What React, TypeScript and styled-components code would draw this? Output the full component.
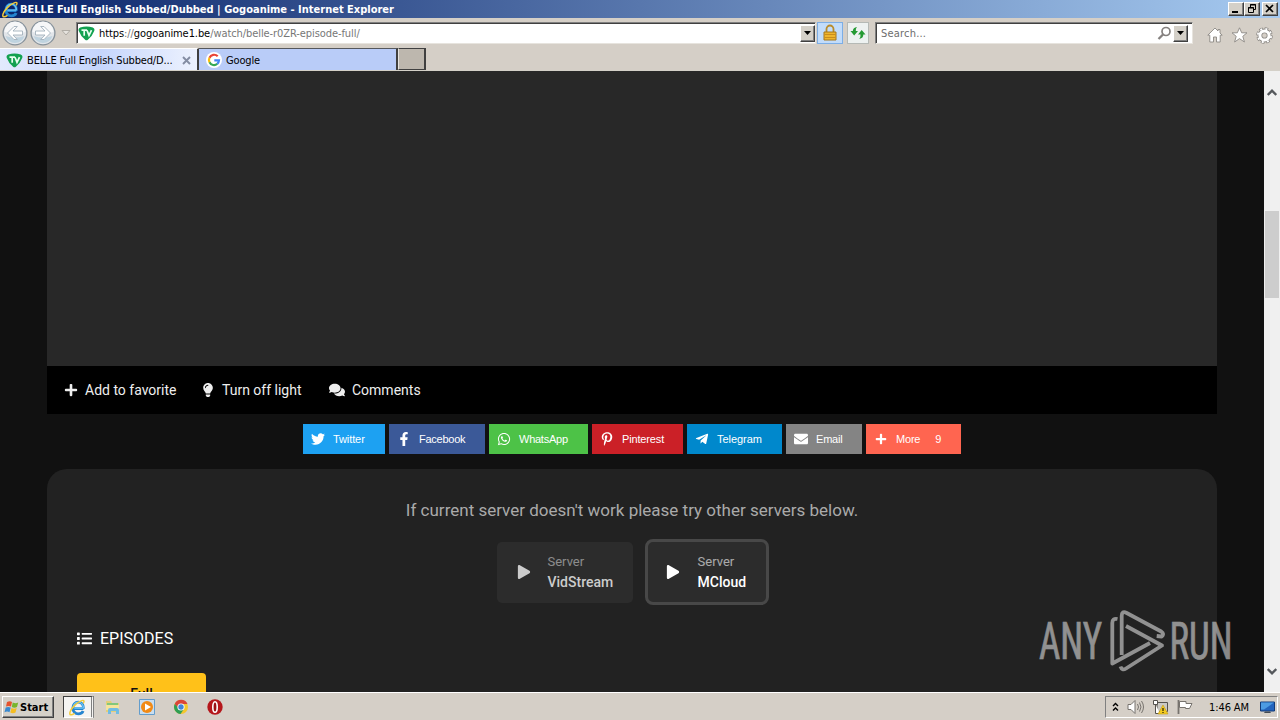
import React from "react";
import styled, { createGlobalStyle, css } from "styled-components";
import {
  FaPlus,
  FaLightbulb,
  FaComments,
  FaTwitter,
  FaFacebookF,
  FaWhatsapp,
  FaPinterestP,
  FaTelegramPlane,
  FaEnvelope,
  FaPlay,
  FaList,
} from "react-icons/fa";

const shareItems = [
  { id: 1, title: "Twitter", color: "#1da1f2", width: 82, spacing: -0.1, icon: <FaTwitter /> },
  { id: 2, title: "Facebook", color: "#3b5998", width: 96, spacing: -0.25, icon: <FaFacebookF /> },
  { id: 3, title: "WhatsApp", color: "#4dc247", width: 99, spacing: -0.25, icon: <FaWhatsapp /> },
  { id: 4, title: "Pinterest", color: "#cb2027", width: 91, spacing: -0.15, icon: <FaPinterestP /> },
  { id: 5, title: "Telegram", color: "#0088cc", width: 95, spacing: -0.05, icon: <FaTelegramPlane /> },
  { id: 6, title: "Email", color: "#848484", width: 76, spacing: -0.2, icon: <FaEnvelope /> },
  { id: 7, title: "More", color: "#ff6550", width: 95, spacing: -0.2, icon: <FaPlus />, iconSize: 12, count: 9 },
];

const servers = [
  { id: 1, name: "VidStream", isActive: false },
  { id: 2, name: "MCloud", isActive: true },
];

const IeLogo = ({ size }: { size: number }) => (
  <svg width={size} height={size} viewBox="0 0 16 16" fill="none">
    <path d="M13.6 9H5M13.6 9C13.8 5.4 11.8 3 8.7 3S3.6 5.5 3.6 8.6 6 14 8.8 14c2.2 0 3.8-1 4.5-2.7" stroke="#2585d0" strokeWidth="2.6" />
    <path d="M13.6 8.6H5M13.5 8.4C13.5 5.4 11.7 3 8.7 3S3.8 5.5 3.8 8.3" stroke="#6cc5f5" strokeWidth="1.2" />
    <path d="M13.4 4.2c1.6-3 .2-3.5-2.5-2.2C6.8 3.8 2.2 8.7 1 12.3c-1 3.2 1.2 3.2 4.2 1.2" stroke="#f2cb3a" strokeWidth="1.4" />
  </svg>
);

const ShieldLogo = () => (
  <svg width="17" height="15" viewBox="0 0 17 15">
    <path d="M2.2 1.6Q8.5-.4 14.8 1.6 17.2 2.6 16.2 5 14.2 10.5 9.6 14 8.5 14.7 7.4 14 2.8 10.5.8 5-.2 2.6 2.2 1.6Z" fill="#12a150" />
    <path d="M3.5 4.2h5.6M6.2 4.2v5.6M9 4.2l2 5.2 2.5-5.2" fill="none" stroke="#e8fff0" strokeWidth="1.7" />
  </svg>
);

const GoogleLogo = () => (
  <svg width="16" height="16" viewBox="0 0 16 16" fill="none" strokeWidth="2.2">
    <circle cx="8" cy="8" r="8" fill="#fff" />
    <path d="M11.7 4.3A5 5 0 0 0 3.5 5.8" stroke="#ea4335" />
    <path d="M3.5 5.8a5 5 0 0 0 0 4.5" stroke="#fbbc05" />
    <path d="M3.5 10.3a5 5 0 0 0 7.8 1.5" stroke="#34a853" />
    <path d="M11.3 11.8A5 5 0 0 0 13 8.3H8.3" stroke="#4285f4" />
  </svg>
);

const NavArrow = ({ flipped }: { flipped?: boolean }) => (
  <svg width="26" height="26" viewBox="0 0 26 26">
    <circle cx="13" cy="13" r="11.9" fill="#e1e5e9" stroke="#87929b" strokeWidth="1.3" />
    <path d="M2.5 12a10.5 10.5 0 0 1 21 0Q13 15 2.5 12Z" fill="#f6f7f8" />
    <path d="M3.5 16a10 10 0 0 0 19 0Q13 19 3.5 16Z" fill="#bfd3df" />
    <path
      transform={flipped ? "matrix(-1 0 0 1 26 0)" : undefined}
      d="M5.5 13 12 6.5h3.3L11 11h9.500v4H11l4.300 4.500H12Z"
      fill="#fff"
      stroke="#a3b1bc"
      strokeWidth=".9"
    />
  </svg>
);

const DownTriangle = () => (
  <svg width="7" height="4" viewBox="0 0 7 4">
    <path d="M0 0h7L3.5 4Z" fill="#000" />
  </svg>
);

const TitleBarSection = () => (
  <TitleBar>
    <IeLogo size={17} />
    <TitleText>BELLE Full English Subbed/Dubbed | Gogoanime - Internet Explorer</TitleText>
    <WindowButton>
      <svg width="12" height="10" viewBox="0 0 12 10"><path d="M2 7h6v2H2Z" /></svg>
    </WindowButton>
    <WindowButton>
      <svg width="12" height="10" viewBox="0 0 12 10" fill="none" stroke="#000">
        <path d="M4.5 3V.5h5v5H8M4 1h6M2.5 3.5h5v5h-5ZM2 4h6" />
      </svg>
    </WindowButton>
    <WindowButton spaced>
      <svg width="12" height="10" viewBox="0 0 12 10"><path d="M2 1l7 7M9 1L2 8" stroke="#000" strokeWidth="1.7" /></svg>
    </WindowButton>
  </TitleBar>
);

const NavigationSection = () => (
  <NavBar>
    <NavButtons>
      <NavArrow />
      <NavArrow flipped />
      <svg width="10" height="8" viewBox="0 0 10 8"><path d="M1 1.5h8L5 6Z" fill="#e6e3de" stroke="#b0aca5" /></svg>
    </NavButtons>
    <AddressBar>
      <ShieldLogo />
      <AddressText>
        <b>https</b>://<b>gogoanime1.be</b>/watch/belle-r0ZR-episode-full/
      </AddressText>
      <DropButton><DownTriangle /></DropButton>
    </AddressBar>
    <ToolButton pressed>
      <svg width="16" height="18" viewBox="0 0 16 18">
        <path d="M4.5 9V5a3.5 3.5 0 0 1 7 0v4" fill="none" stroke="#b98b2a" strokeWidth="1.8" />
        <path d="M2 8h12v8H2Z" fill="#efb52c" stroke="#a5771c" />
        <path d="M2.5 10.5h11M2.5 13.5h11" stroke="#c98d1c" />
      </svg>
    </ToolButton>
    <ToolButton>
      <svg width="16" height="16" viewBox="0 0 16 16" fill="#259a33">
        <path d="M.5 6 4.2 10.5 8 6H5.8q-.3-2.5 1.2-4-4 .5-4.200 4Z" />
        <path d="M8 9.5 11.7 5 15.5 9.5h-2.200q.2 3.500-4 4.500 1.500-1.500 1.200-4.500Z" />
      </svg>
    </ToolButton>
    <SearchBar>
      <SearchText>Search...</SearchText>
      <svg width="15" height="15" viewBox="0 0 15 15" fill="none" stroke="#85817f">
        <circle cx="9" cy="5.5" r="4" strokeWidth="1.7" />
        <path d="M6 8.5l-4.5 4.5" strokeWidth="2.3" />
      </svg>
      <DropButton><DownTriangle /></DropButton>
    </SearchBar>
    <CommandIcons>
      <svg width="16" height="16" viewBox="0 0 16 16">
        <path d="M8 1 .8 8.2h2V15h3.700v-5h3v5h3.700V8.200h2l-2.200-2.200V2.500h-2v1.500Z" fill="#fff" stroke="#8c8985" strokeWidth=".9" />
      </svg>
      <svg width="17" height="16" viewBox="0 0 17 16">
        <path d="m8.500.8 2.200 5h5.300l-4.200 3.500 1.600 5.700-4.900-3.400L3.600 15l1.600-5.700L1 5.800h5.300Z" fill="#fff" stroke="#8c8985" strokeWidth=".9" />
      </svg>
      <svg width="17" height="17" viewBox="0 0 17 17" fill="none">
        <circle cx="8.5" cy="8.5" r="6.7" stroke="#8c8985" strokeWidth="3.2" strokeDasharray="3.4 1.862" />
        <circle cx="8.5" cy="8.5" r="4.6" stroke="#8c8985" strokeWidth="4.6" />
        <circle cx="8.5" cy="8.5" r="6.7" stroke="#fff" strokeWidth="1.8" strokeDasharray="2 3.262" strokeDashoffset="-.7" />
        <circle cx="8.5" cy="8.5" r="4.6" stroke="#fff" strokeWidth="3" />
      </svg>
    </CommandIcons>
  </NavBar>
);

const TabsSection = () => (
  <TabBar>
    <Tab isActive>
      <ShieldLogo />
      <TabTitle>BELLE Full English Subbed/D...</TabTitle>
      <svg width="9" height="9" viewBox="0 0 9 9"><path d="M1 1l7 7M8 1L1 8" stroke="#848da3" strokeWidth="1.9" /></svg>
    </Tab>
    <Tab>
      <GoogleLogo />
      <TabTitle>Google</TabTitle>
    </Tab>
    <NewTab />
  </TabBar>
);

const PlayerSection = () => (
  <>
    <Player />
    <Controls>
      <Control width={137}><FaPlus size={14} /> Add to favorite</Control>
      <Control width={128}><FaLightbulb size={14} /> Turn off light</Control>
      <Control width={100}><FaComments size={16} /> Comments</Control>
    </Controls>
    <ShareRow>
      {shareItems.map((item) => {
        return (
          <ShareButton key={item.id} color={item.color} width={item.width}>
            <ShareIcon size={item.iconSize || 14}>{item.icon}</ShareIcon>
            <ShareTitle spacing={item.spacing}>{item.title}</ShareTitle>
            {item.count && <ShareCount>{item.count}</ShareCount>}
          </ShareButton>
        );
      })}
    </ShareRow>
  </>
);

const ServersSection = () => (
  <ServersPanel>
    <Hint>If current server doesn't work please try other servers below.</Hint>
    <ServerRow>
      {servers.map((server) => {
        return (
          <ServerCard key={server.id} isActive={server.isActive}>
            <FaPlay size={14} />
            <div>
              <ServerLabel>Server</ServerLabel>
              <ServerName>{server.name}</ServerName>
            </div>
          </ServerCard>
        );
      })}
    </ServerRow>
    <EpisodesHeading><FaList size={15} /> EPISODES</EpisodesHeading>
    <EpisodeButton>Full</EpisodeButton>
  </ServersPanel>
);

const AnyRunMark = () => (
  <Watermark>
    <svg width="204" height="66" viewBox="0 0 204 66">
      <g fill="#fff" stroke="#fff" strokeWidth=".7" fontFamily="'Liberation Sans Narrow', Roboto, sans-serif" fontSize="51">
        <text x="1" y="51.3" textLength="63" lengthAdjust="spacingAndGlyphs">ANY</text>
        <text x="131.5" y="51.3" textLength="63" lengthAdjust="spacingAndGlyphs">RUN</text>
      </g>
      <g fill="none" stroke="#fff" strokeWidth="3.8" strokeLinejoin="round">
        <path d="M79.500 11q-5.200-1-5.200 4v40.500l37.700-20.500" />
        <path d="M83.700 47V8q0-5.500 5-3l34.500 18.500q3.500 2.500.5 5l-5-.5" />
        <path d="M88 18l36 19.500-36 23q-4 2.500-5.500-2" />
      </g>
    </svg>
  </Watermark>
);

const Taskbar = () => (
  <TaskbarRow>
    <StartButton>
      <svg width="15" height="15" viewBox="0 0 15 15">
        <path d="M3 2q3-1.500 5 0L7 6.500Q4.500 5.500 2 6.500Z" fill="#e5532d" />
        <path d="M8.700 2.500q3 1.500 5.500 0L13 7q-2.500 1.300-5.200 0Z" fill="#78b52c" />
        <path d="M1.700 7.500q2.500-1.200 5 0l-1.200 4.700q-2.300-1.200-5 0Z" fill="#3989cf" />
        <path d="M7.500 8q2.500 1.500 5.200 0l-1.200 4.500q-2.500 1.500-5.200 0Z" fill="#f5bd21" />
      </svg>
      Start
    </StartButton>
    <RunningApp><IeLogo size={17} /></RunningApp>
    <QuickLaunch>
      <svg width="16" height="16" viewBox="0 0 16 16">
        <path d="M1 2h5l1 2h7v9H1Z" fill="#e4cf76" />
        <path d="M2 4h11v4H2Z" fill="#83c77b" />
        <path d="M1 6h13v5H1Z" fill="#f5e49c" />
        <path d="M3 15v-4q0-2 2-2h7q2 0 2 2v4h-3v-3H6v3Z" fill="#71bce3" />
      </svg>
      <svg width="16" height="16" viewBox="0 0 16 16">
        <path d="M.5.5h15v15H.5Z" fill="#c9def0" stroke="#639dcc" />
        <circle cx="8" cy="8" r="6" fill="#f18a16" />
        <path d="M6 4.5 12 8l-6 3.5Z" fill="#fff" />
      </svg>
      <svg width="16" height="16" viewBox="0 0 16 16">
        <circle cx="8" cy="8" r="7" fill="#f4c72d" />
        <path d="M1.7 5A7 7 0 0 1 14.5 5H8L5 9Z" fill="#db4537" />
        <path d="M1.7 5A7 7 0 0 0 7.5 15l3.5-5-5.5-1Z" fill="#2f9e54" />
        <circle cx="8" cy="8" r="3.6" fill="#fff" />
        <circle cx="8" cy="8" r="2.7" fill="#4285d8" />
      </svg>
      <svg width="16" height="16" viewBox="0 0 16 16">
        <circle cx="8" cy="8" r="7.7" fill="#b5161b" />
        <ellipse cx="8" cy="8" rx="2.2" ry="5.3" fill="#9b1014" stroke="#fff" strokeWidth="1.6" />
      </svg>
    </QuickLaunch>
    <Tray>
      <svg width="7" height="10" viewBox="0 0 7 10" fill="none" stroke="#000" strokeWidth="1.4"><path d="M1 4l2.5-2.5L6 4M1 8.5 3.5 6 6 8.5" /></svg>
      <svg width="17" height="16" viewBox="0 0 17 16" fill="#fff" stroke="#77736e">
        <path d="M1 5.5h3l4-4v13l-4-4H1Z" />
        <path d="M10.5 5q2 3 0 6M12.5 3.5q3 4.500 0 9M14.500 2q4 6 0 12" fill="none" />
      </svg>
      <svg width="17" height="16" viewBox="0 0 17 16">
        <path d="M5 3.5h10.500v9H5Z" fill="#cbc9c4" stroke="#55524e" />
        <path d="M1.5 1.5h4v4h-4ZM3.5 5.5v9H8" fill="#fff" stroke="#55524e" />
        <path d="m11 6 5 9H6Z" fill="#f3cb20" stroke="#c59b12" strokeWidth=".6" />
        <path d="M11 9v3M11 13v1" stroke="#332b08" strokeWidth="1.3" />
      </svg>
      <svg width="16" height="16" viewBox="0 0 16 16" fill="#fff" stroke="#77736e">
        <path d="M1.5 1v14" strokeWidth="1.8" />
        <path d="M2.5 2.5H9v2h6l-2.500 5H8.500v-1h-6Z" />
      </svg>
      <Clock>1:46 AM</Clock>
      <svg width="15" height="14" viewBox="0 0 15 14">
        <path d="M.5 2h14v9H.5Z" fill="#2464bd" stroke="#123b79" />
        <path d="M1 2.5h13L4 9.5H1Z" fill="#4d9be2" />
        <path d="M5 11.5h5l1 1.500H4Z" fill="#434b55" />
      </svg>
    </Tray>
  </TaskbarRow>
);

const App = () => {
  return (
    <Screen>
      <GlobalStyle />
      <TitleBarSection />
      <NavigationSection />
      <TabsSection />
      <Viewport>
        <Page>
          <PlayerSection />
          <ServersSection />
        </Page>
        <ScrollBar>
          <svg width="10" height="7" viewBox="0 0 10 7"><path d="M.7 6 5 1.7 9.3 6" fill="none" stroke="#55585c" strokeWidth="2.4" /></svg>
          <ScrollThumb />
          <svg width="10" height="7" viewBox="0 0 10 7"><path d="M.7 1 5 5.3 9.3 1" fill="none" stroke="#55585c" strokeWidth="2.4" /></svg>
        </ScrollBar>
        <AnyRunMark />
      </Viewport>
      <Taskbar />
    </Screen>
  );
};

export default App;

const GlobalStyle = createGlobalStyle`
  * {
    box-sizing: border-box;
  }
  body {
    margin: 0;
    overflow: hidden;
  }
  svg {
    flex: none;
    display: block;
  }
`;

const tahoma = css`
  font-family: "DejaVu Sans Condensed", "DejaVu Sans", sans-serif;
  font-stretch: condensed;
  font-size: 11px;
`;

const raised = css`
  background: #d4d0c8;
  border: 1px solid;
  border-color: #fff #404040 #404040 #fff;
  box-shadow: inset -1px -1px #808080;
`;

const Screen = styled.div`
  width: 1280px;
  height: 720px;
  display: flex;
  flex-direction: column;
  background: #d5cfc7;
  overflow: hidden;
  ${tahoma}
`;

const TitleBar = styled.div`
  height: 18px;
  display: flex;
  align-items: center;
  padding: 0 2px;
  background: linear-gradient(90deg, #0a246a, #a6caf0);
`;

const TitleText = styled.div`
  flex: 1;
  padding-left: 1px;
  color: #fff;
  font-weight: bold;
  white-space: nowrap;
`;

const WindowButton = styled.div<{ spaced?: boolean }>`
  ${raised}
  width: 16px;
  height: 14px;
  margin-left: ${(props) => (props.spaced ? 2 : 0)}px;
  padding: 1px;
`;

const NavBar = styled.div`
  height: 30px;
  display: flex;
  align-items: flex-start;
  padding: 4px 7px 0 2px;
`;

const NavButtons = styled.div`
  width: 74px;
  display: flex;
  align-items: center;
  gap: 2px;
  margin-top: -2px;

  & svg:last-child {
    margin-left: 3px;
  }
`;

const field = css`
  height: 22px;
  display: flex;
  align-items: center;
  background: #fff;
  border: 1px solid;
  border-color: #808080 #e7e4de #e7e4de #808080;
  box-shadow: inset 1px 1px #404040;
`;

const AddressBar = styled.div`
  ${field}
  width: 740px;
  padding-left: 1px;
`;

const AddressText = styled.div`
  flex: 1;
  padding: 1px 0 0 4px;
  color: #777;
  letter-spacing: -0.08px;

  & b {
    color: #000;
    font-weight: normal;
  }
`;

const DropButton = styled.div`
  ${raised}
  width: 15px;
  height: 17px;
  display: flex;
  align-items: center;
  justify-content: center;
`;

const ToolButton = styled.div<{ pressed?: boolean }>`
  width: ${(props) => (props.pressed ? 26 : 22)}px;
  height: 22px;
  margin-left: ${(props) => (props.pressed ? 1 : 4)}px;
  display: flex;
  align-items: center;
  justify-content: center;
  border: 1px solid ${(props) => (props.pressed ? "#7caee6" : "#b5b9b5")};
  background: ${(props) => (props.pressed ? "#c2dcfa" : "#edf1f0")};
`;

const SearchBar = styled.div`
  ${field}
  width: 318px;
  margin-left: 6px;
  padding-right: 4px;
  gap: 1px;
`;

const SearchText = styled.div`
  flex: 1;
  padding: 1px 0 0 5px;
  color: #6d6d6d;
  letter-spacing: 0.2px;
`;

const CommandIcons = styled.div`
  display: flex;
  gap: 8px;
  margin: 5px 0 0 14px;
`;

const TabBar = styled.div`
  height: 23px;
  display: flex;
  border-bottom: 1px solid #d4d0c8;
`;

const Tab = styled.div<{ isActive?: boolean }>`
  width: 199px;
  height: 22px;
  display: flex;
  align-items: center;
  padding: 1px 6px 0 ${(props) => (props.isActive ? 6 : 7)}px;
  border-top: 1px solid ${(props) => (props.isActive ? "#fff" : "#55585d")};
  border-right: 2px solid #404040;
  background: ${(props) =>
    props.isActive ? "linear-gradient(90deg, #e2eafd, #c5d5fc 50%, #edf2fe)" : "#b9ccf8"};
`;

const TabTitle = styled.div`
  flex: 1;
  padding-left: 4px;
  letter-spacing: -0.16px;
  white-space: nowrap;
`;

const NewTab = styled.div`
  width: 28px;
  height: 22px;
  border: 1px solid;
  border-color: #404040 #404040 #404040 #e8e5df;
  border-right-width: 2px;
  background: #bdb7ae;
`;

const Viewport = styled.div`
  position: relative;
  height: 621px;
  display: flex;
  background: #111;
`;

const Page = styled.div`
  width: 1264px;
  height: 621px;
  padding: 0 47px;
  overflow: hidden;
  font-family: Roboto, sans-serif;
  font-stretch: normal;
`;

const Player = styled.div`
  height: 295px;
  background: #282828;
`;

const Controls = styled.div`
  height: 48px;
  display: flex;
  align-items: center;
  padding-left: 17px;
  background: #000;
  color: #eee;
  font-size: 14px;
`;

const Control = styled.div<{ width: number }>`
  width: ${(props) => props.width}px;
  display: flex;
  align-items: center;
  gap: 7px;
  white-space: nowrap;
`;

const ShareRow = styled.div`
  display: flex;
  justify-content: center;
  gap: 4px;
  margin: 10px 0 15px;
`;

const ShareButton = styled.div<{ color: string; width: number }>`
  width: ${(props) => props.width}px;
  height: 30px;
  display: flex;
  align-items: center;
  padding-left: 7px;
  background: ${(props) => props.color};
  color: #fff;
  font-family: "Liberation Sans", sans-serif;
`;

const ShareIcon = styled.div<{ size: number }>`
  width: 15px;
  display: flex;
  justify-content: center;
  font-size: ${(props) => props.size}px;
`;

const ShareTitle = styled.div<{ spacing: number }>`
  margin-left: 8px;
  letter-spacing: ${(props) => props.spacing}px;
`;

const ShareCount = styled.div`
  margin-left: 15px;
`;

const ServersPanel = styled.div`
  height: 300px;
  padding: 30px 30px 0;
  border-radius: 20px 20px 0 0;
  background: #222;
`;

const Hint = styled.div`
  height: 22px;
  color: #aaa;
  font-size: 17px;
  line-height: 22px;
  text-align: center;
`;

const ServerRow = styled.div`
  height: 66px;
  display: flex;
  align-items: center;
  justify-content: center;
  gap: 12px;
  margin-top: 18px;
  padding-left: 2px;
`;

const ServerCard = styled.div<{ isActive: boolean }>`
  width: ${(props) => (props.isActive ? 124 : 136)}px;
  height: ${(props) => (props.isActive ? 66 : 61)}px;
  display: flex;
  align-items: center;
  gap: ${(props) => (props.isActive ? 17.6 : 16.5)}px;
  padding-left: ${(props) => (props.isActive ? 18 : 20)}px;
  border: ${(props) => (props.isActive ? "3px solid #484848" : "none")};
  border-radius: ${(props) => (props.isActive ? 8 : 5)}px;
  background: #2c2c2c;
  color: ${(props) => (props.isActive ? "#fff" : "#ccc")};
`;

const ServerLabel = styled.div`
  font-size: 13px;
  line-height: 20px;
  opacity: 0.6;
`;

const ServerName = styled.div`
  font-size: 14px;
  font-weight: 500;
  line-height: 20px;
`;

const EpisodesHeading = styled.div`
  height: 24px;
  display: flex;
  align-items: center;
  gap: 8px;
  margin: 21px 0 23px;
  color: #fff;
  font-size: 16px;
`;

const EpisodeButton = styled.div`
  width: 129px;
  height: 42px;
  border-radius: 4px;
  background: #ffc119;
  color: #111;
  font-size: 14px;
  font-weight: 500;
  line-height: 42px;
  text-align: center;
`;

const ScrollBar = styled.div`
  width: 16px;
  display: flex;
  flex-direction: column;
  align-items: center;
  padding: 18px 0 17px;
  background: #f0f0f0;

  & svg:last-child {
    margin-top: auto;
  }
`;

const ScrollThumb = styled.div`
  width: 14px;
  height: 87px;
  margin-top: 115px;
  background: #cdcdcd;
`;

const Watermark = styled.div`
  position: absolute;
  right: 38px;
  bottom: 18px;
  opacity: 0.5;
`;

const TaskbarRow = styled.div`
  height: 28px;
  display: flex;
  align-items: center;
  padding: 1px 2px 0;
  border-top: 1px solid #fff;
`;

const StartButton = styled.div`
  ${raised}
  width: 52px;
  height: 22px;
  display: flex;
  align-items: center;
  gap: 1px;
  padding-left: 1px;
  font-weight: bold;
`;

const RunningApp = styled.div`
  width: 31px;
  height: 22px;
  display: flex;
  align-items: center;
  justify-content: center;
  margin-left: 9px;
  border: 1px solid;
  border-color: #404040 #fff #fff #404040;
  border-right: 3px double #808080;
  background: #f5f4f2;
`;

const QuickLaunch = styled.div`
  display: flex;
  gap: 18px;
  margin-left: 11px;
`;

const Tray = styled.div`
  width: 173px;
  height: 22px;
  display: flex;
  align-items: center;
  gap: 8px;
  margin-left: auto;
  padding-left: 6px;
  border: 1px solid;
  border-color: #808080 #fff #fff #808080;
`;

const Clock = styled.div`
  width: 42px;
  margin: 0 1px 0 8px;
  letter-spacing: -0.1px;
  white-space: nowrap;
`;
